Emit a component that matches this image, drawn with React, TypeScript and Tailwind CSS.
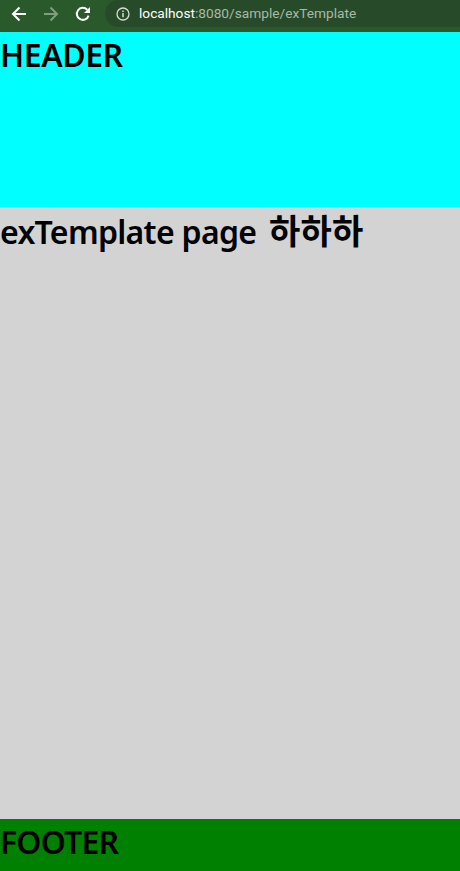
const BrowserBar = () => (
    <div className="flex h-[32px] w-full items-start bg-[#2a5a2c] font-['Roboto',sans-serif]">
        <div className="flex h-[27px] items-center">
            {/* Back */}
            <svg className="ml-[11px] h-[16px] w-[16px]" viewBox="0 0 16 16" fill="none" stroke="#fff" strokeWidth="2">
                <path d="M15 8H2M8.5 1.5 2 8l6.5 6.5" />
            </svg>
            {/* Forward */}
            <svg className="ml-[16px] h-[16px] w-[16px]" viewBox="0 0 16 16" fill="none" stroke="#7f9f80" strokeWidth="2">
                <path d="M1 8h13M7.5 1.5 14 8l-6.5 6.5" />
            </svg>
            {/* Reload */}
            <svg className="ml-[16px] h-[16px] w-[16px]" viewBox="0 0 16 16" fill="none">
                <path d="M13.6 9.6A6 6 0 1 1 12.2 3.7" stroke="#fff" strokeWidth="2" />
                <path d="M15 1v6H9z" fill="#fff" />
            </svg>
        </div>
        <div className="ml-[14px] flex h-[27px] flex-1 items-center rounded-tl-[14px] rounded-bl-[14px] bg-[#274b29] pl-[11px]">
            <svg className="h-[14px] w-[14px]" viewBox="0 0 14 14" fill="none">
                <circle cx="7" cy="7" r="6" stroke="#d6dcd6" strokeWidth="1.3" />
                <path d="M7 6v4.2" stroke="#d6dcd6" strokeWidth="1.5" />
                <path d="M7 3.4v1.5" stroke="#d6dcd6" strokeWidth="1.5" />
            </svg>
            <span className="ml-[9px] text-[13.7px] leading-none whitespace-nowrap text-white">
                localhost<span className="text-[#a9b9aa]">:8080/sample/exTemplate</span>
            </span>
        </div>
    </div>
);

export default function App() {
    return (
        <div className="flex h-[871px] w-full flex-col overflow-hidden font-['Noto_Sans','Noto_Sans_CJK_KR',sans-serif]">
            <BrowserBar />
            <header className="h-[175px] bg-[#00ffff]">
                <h1 className="text-[32px] leading-[46px] font-semibold tracking-[-0.45px] text-black">HEADER</h1>
            </header>
            <main className="flex-1 bg-[#d3d3d3]">
                <h1 className="text-[32px] leading-[48px] font-semibold tracking-[-0.7px] text-black">
                    exTemplate page <span className="ml-[5px] text-[34px] font-bold tracking-[0.3px]">하하하</span>
                </h1>
            </main>
            <footer className="h-[52px] bg-[#008000]">
                <h1 className="text-[32px] leading-[46px] font-semibold tracking-[-0.85px] text-black">FOOTER</h1>
            </footer>
        </div>
    );
}
